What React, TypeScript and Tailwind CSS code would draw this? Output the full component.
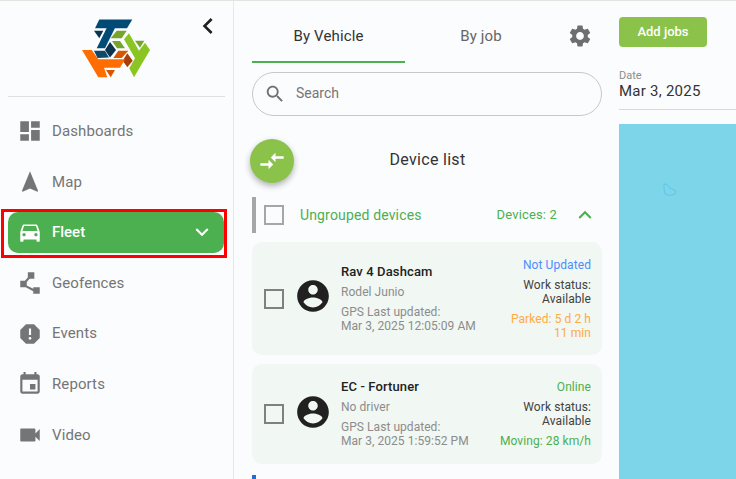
const ICONS = {
  dashboard: 'M3 13h8V3H3v10zm0 8h8v-6H3v6zm10 0h8V11h-8v10zm0-18v6h8V3h-8z',
  navigation: 'M12 2L4.5 20.29l.71.71L12 18l6.79 3 .71-.71z',
  car: 'M18.92 6.01C18.72 5.42 18.16 5 17.5 5h-11c-.66 0-1.21.42-1.42 1.01L3 12v8c0 .55.45 1 1 1h1c.55 0 1-.45 1-1v-1h12v1c0 .55.45 1 1 1h1c.55 0 1-.45 1-1v-8l-2.08-5.99zM6.5 16c-.83 0-1.5-.67-1.5-1.5S5.67 13 6.5 13s1.5.67 1.5 1.5S7.33 16 6.5 16zm11 0c-.83 0-1.5-.67-1.5-1.5s.67-1.5 1.5-1.5 1.5.67 1.5 1.5-.67 1.5-1.5 1.5zM5 11l1.5-4.5h11L19 11H5z',
  polyline: 'M15 16v1.26l-6-3v-3.17L11.7 8H16V2h-6v4.9L7.3 10H3v6h5l7 3.5V22h6v-6z',
  report: 'M15.73 3H8.27L3 8.27v7.46L8.27 21h7.46L21 15.73V8.27L15.73 3zM12 17.3c-.72 0-1.3-.58-1.3-1.3 0-.72.58-1.3 1.3-1.3.72 0 1.3.58 1.3 1.3 0 .72-.58 1.3-1.3 1.3zm1-4.3h-2V7h2v6z',
  event: 'M17 12h-5v5h5v-5zM16 1v2H8V1H6v2H5c-1.11 0-1.99.9-1.99 2L3 19c0 1.1.89 2 2 2h14c1.1 0 2-.9 2-2V5c0-1.1-.9-2-2-2h-1V1h-2zm3 18H5V8h14v11z',
  video: 'M17 10.5V7c0-.55-.45-1-1-1H4c-.55 0-1 .45-1 1v10c0 .55.45 1 1 1h12c.55 0 1-.45 1-1v-3.5l4 4v-11l-4 4z',
  settings: 'M19.14 12.94c.04-.3.06-.61.06-.94 0-.32-.02-.64-.07-.94l2.03-1.58c.18-.14.23-.41.12-.61l-1.92-3.32c-.12-.22-.37-.29-.59-.22l-2.39.96c-.5-.38-1.03-.7-1.62-.94l-.36-2.54c-.04-.24-.24-.41-.48-.41h-3.84c-.24 0-.43.17-.47.41l-.36 2.54c-.59.24-1.13.57-1.62.94l-2.39-.96c-.22-.08-.47 0-.59.22L2.74 8.87c-.12.21-.08.47.12.61l2.03 1.58c-.05.3-.09.63-.09.94s.02.64.07.94l-2.03 1.58c-.18.14-.23.41-.12.61l1.92 3.32c.12.22.37.29.59.22l2.39-.96c.5.38 1.03.7 1.62.94l.36 2.54c.05.24.24.41.48.41h3.84c.24 0 .44-.17.47-.41l.36-2.54c.59-.24 1.13-.56 1.62-.94l2.39.96c.22.08.47 0 .59-.22l1.92-3.32c.12-.22.07-.47-.12-.61l-2.01-1.58zM12 15.6c-1.98 0-3.6-1.62-3.6-3.6s1.62-3.6 3.6-3.6 3.6 1.62 3.6 3.6-1.62 3.6-3.6 3.6z',
  search: 'M15.5 14h-.79l-.28-.27C15.41 12.59 16 11.11 16 9.5 16 5.91 13.09 3 9.5 3S3 5.91 3 9.5 5.91 16 9.5 16c1.61 0 3.09-.59 4.23-1.57l.27.28v.79l5 4.99L20.49 19l-4.99-5zm-6 0C7.01 14 5 11.99 5 9.5S7.01 5 9.5 5 14 7.01 14 9.5 11.99 14 9.5 14z',
  compare: 'M9.01 14H2v2h7.01v3L13 15l-3.99-4v3zm5.98-1v-3H22V8h-7.01V5L11 9l3.99 4z',
  account: 'M12 2C6.48 2 2 6.48 2 12s4.48 10 10 10 10-4.48 10-10S17.52 2 12 2zm0 3c1.66 0 3 1.34 3 3s-1.34 3-3 3-3-1.34-3-3 1.34-3 3-3zm0 14.2c-2.5 0-4.71-1.28-6-3.22.03-1.99 4-3.08 6-3.08 1.99 0 5.97 1.09 6 3.08-1.29 1.94-3.5 3.22-6 3.22z',
  expandMore: 'M16.59 8.59L12 13.17 7.41 8.59 6 10l6 6 6-6z',
  expandLess: 'M12 8l-6 6 1.41 1.41L12 10.83l4.59 4.58L18 14z',
  chevronLeft: 'M15.41 7.41 14 6l-6 6 6 6 1.41-1.41L10.83 12z',
};

const Icon = ({ name, className }: { name: keyof typeof ICONS; className: string }) => (
  <svg viewBox="0 0 24 24" fill="currentColor" className={className}>
    <path d={ICONS[name]} />
  </svg>
);

const Logo = () => (
  <svg viewBox="80 17 72 62" className="w-[72px] h-[62px]">
    <polygon fill="#004b76" points="99.3,19.5 132.3,19.5 127,28.3 95,28.3" />
    <polygon fill="#004b76" points="106.7,28 115,28 105,48.3 96.7,48.3" />
    <polygon fill="#0c3350" points="94,30.7 103.3,30.7 99.3,38.3" />
    <polygon fill="#76a52d" points="116.7,30.7 126.7,30.7 121.7,38.3 110.7,38.3" />
    <polygon fill="#76a52d" points="112,41 120,41 125,48.3 117,48.3" />
    <polygon fill="#0c3350" points="110,42 116,50 110,57.5 105,50" />
    <polygon fill="#0e4a68" points="94,50.7 105,50.7 109,57.5 97.5,58" />
    <polygon fill="#d95600" points="118.3,50.7 128.3,50.7 121.7,58 113.3,58" />
    <polygon fill="#a83e08" points="127.3,53.3 132.7,60.7 127.3,67.3 122.7,60.7" />
    <polygon fill="#ff6d00" points="82,50 91.7,50 98.3,59.3 125,59.3 120,67.7 104,67.7 107.3,77.3 98.3,77.3" />
    <polygon fill="#d95600" points="106,70 115,70 110.7,77.3" />
    <polygon fill="#8bc524" points="124,39.3 129,33.3 139,50.7 145,42.7 150,50 134,77.3 129.3,68.3 135,58.3" />
    <polygon fill="#76a52d" points="135,40.7 144.3,40.7 140,47.7" />
  </svg>
);

const NAV_ITEMS: { icon: keyof typeof ICONS; label: string }[] = [
  { icon: 'dashboard', label: 'Dashboards' },
  { icon: 'navigation', label: 'Map' },
  { icon: 'car', label: 'Fleet' },
  { icon: 'polyline', label: 'Geofences' },
  { icon: 'report', label: 'Events' },
  { icon: 'event', label: 'Reports' },
  { icon: 'video', label: 'Video' },
];

const Sidebar = () => (
  <aside className="w-[234px] shrink-0 border-r border-[#e6e8ea] flex flex-col">
    <div className="relative h-[96px] mx-2 border-b border-[#dfe0e1] flex justify-center pt-[16px] pr-[1px]">
      <Logo />
      <Icon name="chevronLeft" className="absolute right-px top-[9px] w-[32px] h-[32px] text-[#1f1f1f]" />
    </div>
    <nav className="pt-[9px]">
      {NAV_ITEMS.map((item) =>
        item.label === 'Fleet' ? (
          <div key={item.label} className="h-[50.6px] pt-[1.5px]">
            <div className="ml-px w-[226px] h-[49px] border-[3px] border-[#ff0000] pl-1 pb-[2px]">
              <div className="h-full rounded-[10px] bg-[#4caf50] text-white flex items-center pl-[9px] pr-[9px]">
                <Icon name={item.icon} className="w-[26px] h-[26px]" />
                <span className="ml-[9px] text-[15px] font-medium flex-1">{item.label}</span>
                <Icon name="expandMore" className="w-[26px] h-[26px]" />
              </div>
            </div>
          </div>
        ) : (
          <div key={item.label} className="h-[50.6px] flex items-center pl-[17px] text-[#757575]">
            <Icon name={item.icon} className="w-[26px] h-[26px]" />
            <span className="ml-[9px] text-[15px] tracking-[0.1px]">{item.label}</span>
          </div>
        ),
      )}
    </nav>
  </aside>
);

const Checkbox = ({ className }: { className: string }) => (
  <div className={`w-5 h-5 shrink-0 border-2 ${className}`} />
);

interface Device {
  name: string;
  driver: string;
  updated: string;
  status: string;
  statusColor: string;
  motion: string;
  motionColor: string;
  height: string;
}

const DeviceCard = ({ device }: { device: Device }) => (
  <div className={`${device.height} rounded-[10px] bg-[#f1f7f2] flex items-center pl-3 pr-[11px]`}>
    <Checkbox className="border-[#808080]" />
    <Icon name="account" className="w-[38px] h-[38px] text-[#212121] ml-[10px] mb-[5px] shrink-0" />
    <div className="ml-[9px] flex-1 text-[12px] leading-[14px] tracking-[0.05px] text-[#8c8c8c]">
      <div className="text-[13px] font-medium tracking-[0.12px] text-[#212121]">{device.name}</div>
      <div className="mt-[6px]">{device.driver}</div>
      <div className="mt-[6px]">GPS Last updated:</div>
      <div>{device.updated}</div>
    </div>
    <div className="w-[93px] shrink-0 text-right text-[12px] leading-[14px] tracking-[0.08px] text-[#424242]">
      <div className={device.statusColor}>{device.status}</div>
      <div className="mt-[6px] pl-[20px]">Work status: Available</div>
      <div className={`mt-[6px] ${device.motionColor}`}>{device.motion}</div>
    </div>
  </div>
);

const DEVICES: Device[] = [
  {
    name: 'Rav 4 Dashcam',
    driver: 'Rodel Junio',
    updated: 'Mar 3, 2025 12:05:09 AM',
    status: 'Not Updated',
    statusColor: 'text-[#4d8dff]',
    motion: 'Parked: 5 d 2 h 11 min',
    motionColor: 'text-[#ffab40]',
    height: 'h-[113px]',
  },
  {
    name: 'EC - Fortuner',
    driver: 'No driver',
    updated: 'Mar 3, 2025 1:59:52 PM',
    status: 'Online',
    statusColor: 'text-[#4caf50]',
    motion: 'Moving: 28 km/h',
    motionColor: 'text-[#4caf50]',
    height: 'h-[100px]',
  },
];

const DeviceColumn = () => (
  <section className="w-[385px] shrink-0">
    <div className="mx-[18px] w-[350px]">
      <div className="h-[62px] flex relative">
        <div className="w-[153px] border-b-2 border-[#4caf50] flex items-center justify-center pt-[11px] text-[15px] tracking-[0.15px] text-[#333]">
          By Vehicle
        </div>
        <div className="w-[152px] flex items-center justify-center pt-[9px] text-[15px] tracking-[0.15px] text-[#666]">
          By job
        </div>
        <Icon name="settings" className="w-[26px] h-[26px] text-[#6e6e6e] mt-[22px] ml-[10px]" />
      </div>
      <div className="mt-[9px] h-[44px] rounded-full border border-[#c8c8c8] flex items-center pl-[11px] text-[14px] text-[#757575]">
        <Icon name="search" className="w-[22px] h-[22px] text-[#707070]" />
        <span className="ml-[10px] mb-[2px]">Search</span>
      </div>
      <div className="relative mt-[23px] h-[44px] flex items-center justify-center pb-[2px] pl-[1px] text-[16px] tracking-[0.3px] text-[#333]">
        <div className="absolute left-[-2px] top-0 w-[44px] h-[44px] rounded-full bg-[#8bc34a] text-white shadow-[0_3px_6px_rgba(0,0,0,0.3)] flex items-center justify-center">
          <Icon name="compare" className="w-[28px] h-[28px]" />
        </div>
        Device list
      </div>
      <div className="mt-[14px] h-[36px] flex items-center border-l-[4px] border-[#a6a6a6] pl-2 text-[#4caf50]">
        <Checkbox className="border-[#a6a6a6]" />
        <span className="ml-[16px] text-[14px] tracking-[0.15px] flex-1">Ungrouped devices</span>
        <span className="text-[13px] tracking-[0.15px]">Devices: 2</span>
        <Icon name="expandLess" className="w-[26px] h-[26px] ml-[15px] mr-1" />
      </div>
      <div className="mt-[9px] flex flex-col gap-[9px]">
        {DEVICES.map((device) => (
          <DeviceCard key={device.name} device={device} />
        ))}
      </div>
      <div className="mt-[11px] w-1 h-1 bg-[#1a6fe0]" />
    </div>
  </section>
);

const JobsColumn = () => (
  <section className="flex-1 flex flex-col min-w-0">
    <div className="mt-[16px] w-[88px] h-[30px] rounded-[4px] bg-[#8bc34a] text-white text-[13px] font-medium flex items-center justify-center">
      Add jobs
    </div>
    <div className="mt-[22px] h-[41px] border-b border-[#d9d9d9]">
      <div className="text-[11px] leading-[13px] text-[#8c8c8c]">Date</div>
      <div className="text-[15px] leading-[18px] tracking-[0.25px] text-[#333]">Mar 3, 2025</div>
    </div>
    <div className="mt-[14px] flex-1 bg-[#7dd5ea] pt-[59px] pl-[43px]">
      <svg viewBox="0 0 16 14" fill="none" stroke="#5fc4ea" className="w-[16px] h-[14px]">
        <path d="M2 1 L5 1.5 L8 5 L14 8 L13 11 L8 12.5 L3 11 L2 6 Z" />
      </svg>
    </div>
  </section>
);

export default function App() {
  return (
    <div className="w-[736px] h-[479px] overflow-hidden bg-[#fbfcfe] border-t border-[#e3e4df] flex font-['Roboto',sans-serif]">
      <Sidebar />
      <DeviceColumn />
      <JobsColumn />
    </div>
  );
}
